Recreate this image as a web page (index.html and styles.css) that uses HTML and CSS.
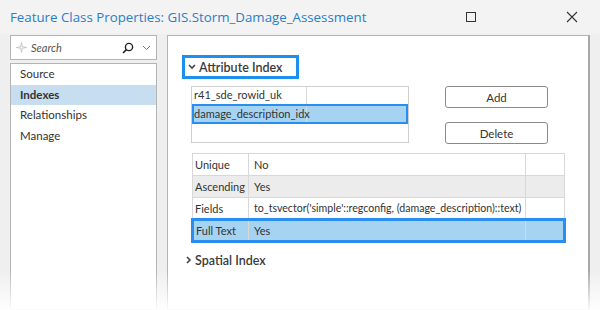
FILE: index.html
```html
<!DOCTYPE html>
<html lang="en">

<head>
  <meta charset="UTF-8">
  <title>Feature Class Properties</title>
  <link rel="stylesheet" href="styles.css">
</head>

<body>
  <div class="window">
    <div class="titlebar">
      <div class="title">Feature Class Properties: GIS.Storm_Damage_Assessment</div>
      <div class="win-buttons">
        <svg class="win-icon" width="12" height="12" viewBox="0 0 12 12">
          <rect x="1.5" y="1.5" width="9" height="9" fill="none" stroke="#333" stroke-width="1"/>
        </svg>
        <svg class="win-icon" width="12" height="12" viewBox="0 0 12 12">
          <path d="M1 1 L11 11 M11 1 L1 11" stroke="#333" stroke-width="1.1"/>
        </svg>
      </div>
    </div>

    <div class="body">
      <!-- left side: search + page list -->
      <div class="sidebar">
        <div class="search">
          <svg width="11" height="11" viewBox="0 0 11 11" class="sparkle">
            <path d="M5.5 0.5 L6.3 4.7 L10.5 5.5 L6.3 6.3 L5.5 10.5 L4.7 6.3 L0.5 5.5 L4.7 4.7 Z" fill="none" stroke="#bbb" stroke-width="0.8"/>
          </svg>
          <span class="search-text">Search</span>
          <svg width="12" height="12" viewBox="0 0 12 12" class="search-icon">
            <circle cx="7" cy="5" r="3.6" fill="none" stroke="#222" stroke-width="1.4"/>
            <path d="M4.4 7.6 L1 11" stroke="#222" stroke-width="1.6"/>
          </svg>
          <svg width="9" height="6" viewBox="0 0 9 6" class="search-drop">
            <path d="M1 1 L4.5 4.5 L8 1" fill="none" stroke="#777" stroke-width="1"/>
          </svg>
        </div>
        <div class="page-list">
          <div class="page-item">Source</div>
          <div class="page-item selected">Indexes</div>
          <div class="page-item">Relationships</div>
          <div class="page-item">Manage</div>
        </div>
      </div>

      <!-- right side: index settings -->
      <div class="panel">
        <div class="section-head boxed">
          <svg width="8" height="6" viewBox="0 0 8 6"><path d="M1 1 L4 4 L7 1" fill="none" stroke="#444" stroke-width="1.6"/></svg>
          <span>Attribute Index</span>
        </div>

        <div class="index-row">
          <div class="index-list">
            <div class="index-item"><span class="c1">r41_sde_rowid_uk</span><span class="c2"></span></div>
            <div class="index-item active"><span class="c1">damage_description_idx</span><span class="c2"></span></div>
          </div>
          <div class="index-buttons">
            <button class="btn">Add</button>
            <button class="btn">Delete</button>
          </div>
        </div>

        <table class="props">
          <colgroup>
            <col class="col-key">
            <col>
            <col class="col-end">
          </colgroup>
          <tr><td class="k">Unique</td><td>No</td><td></td></tr>
          <tr class="grey"><td class="k">Ascending</td><td>Yes</td><td></td></tr>
          <tr><td class="k">Fields</td><td class="long">to_tsvector('simple'::regconfig, (damage_description)::text)</td><td></td></tr>
          <tr class="active"><td class="k">Full Text</td><td>Yes</td><td></td></tr>
        </table>

        <div class="section-head">
          <svg width="6" height="8" viewBox="0 0 6 8"><path d="M1 1 L4 4 L1 7" fill="none" stroke="#444" stroke-width="1.6"/></svg>
          <span>Spatial Index</span>
        </div>
      </div>
    </div>
    <div class="fade"></div>
  </div>
</body>

</html>
```

FILE: styles.css
```css
/* Reset */
* {
  margin: 0;
  padding: 0;
  box-sizing: border-box;
}

html,
body {
  height: 100%;
  font-family: Lato, "Open Sans", sans-serif;
  font-size: 11px;
  color: #333;
  background: #efefef;
}

.window {
  position: relative;
  height: 310px;
  overflow: hidden;
  display: flex;
  flex-direction: column;
}

/* Title bar */
.titlebar {
  height: 34px;
  display: flex;
  align-items: center;
  padding-left: 10px;
  background: #f3f3f3;
}

.title {
  flex: 1;
  font-family: "Open Sans", sans-serif;
  font-size: 13.3px;
  color: #2a7dc8;
}

.win-buttons {
  display: flex;
  gap: 89px;
  padding-right: 22px;
}

/* Main area */
.body {
  flex: 1;
  display: flex;
  gap: 10px;
  padding: 1px 10px 0 10px;
}

.sidebar {
  width: 147px;
  display: flex;
  flex-direction: column;
  gap: 3px;
}

.search {
  height: 25px;
  background: #fff;
  border: 1px solid #b4b4b4;
  display: flex;
  align-items: center;
  padding: 0 5px;
}

.sparkle {
  margin-right: 4px;
}

.search-text {
  flex: 1;
  font-style: italic;
  color: #555;
}

.search-icon {
  margin-right: 8px;
}

.page-list {
  flex: 1;
  background: #fff;
  border: 1px solid #b4b4b4;
}

.page-item {
  height: 20.5px;
  line-height: 20px;
  padding-left: 9px;
  font-size: 11.5px;
}

.page-item.selected {
  background: #c7ddf0;
  font-weight: bold;
}

.panel {
  flex: 1;
  background: #fff;
  border: 1px solid #b4b4b4;
  border-right: 2px solid #a8a8a8;
  padding: 19px 0 0 14px;
}

.section-head {
  display: inline-flex;
  align-items: center;
  gap: 3px;
  height: 24px;
  padding: 0 4px;
  font-size: 12.5px;
  font-weight: 600;
  white-space: nowrap;
  color: #3a3a3a;
}

.section-head.boxed {
  border: 3px solid #1d8fec;
  width: 117px;
  padding-left: 3px;
}

.index-row {
  display: flex;
  gap: 36px;
  margin: 7px 0 0 9px;
}

.index-list {
  width: 218px;
  height: 57px;
  border: 1px solid #cfcfcf;
}

.index-item {
  display: flex;
  height: 17px;
  line-height: 16px;
}

.index-item .c1 {
  width: 115px;
  border-right: 1px solid #dadada;
  padding-left: 2px;
  white-space: nowrap;
}

.index-item.active {
  height: 20px;
  background: #a6d3f2;
  border: 2px solid #2a8ef0;
}

.index-item.active .c1 {
  width: 113px;
  padding-left: 0;
}

.index-buttons {
  display: flex;
  flex-direction: column;
  gap: 14px;
}

.btn {
  width: 103px;
  height: 22px;
  background: #fff;
  border: 1px solid #8a8a8a;
  border-radius: 3px;
  font-family: inherit;
  font-size: 11.5px;
  color: #333;
}

.props {
  margin: 9px 0 5px 9px;
  width: 375px;
  table-layout: fixed;
  border-collapse: collapse;
}

.col-key {
  width: 56px;
}

.col-end {
  width: 39px;
}

.props td {
  height: 22px;
  border: 1px solid #d8d8d8;
  padding: 0 2px 0 5px;
  white-space: nowrap;
}

.props td.k {
  padding-left: 2px;
}

.props td.long {
  font-size: 10.6px;
}

.props tr.grey td {
  background: #ececec;
}

.props tr.active td {
  background: #a6d3f2;
  border-top: 3px solid #2a8ef0;
  border-bottom: 3px solid #2a8ef0;
}

.props tr.active td:first-child {
  border-left: 3px solid #2a8ef0;
}

.props tr.active td:last-child {
  border-right: 3px solid #2a8ef0;
}

/* soft fade at the bottom of the screenshot */
.fade {
  position: absolute;
  left: 0;
  right: 0;
  bottom: 0;
  height: 40px;
  background: linear-gradient(rgba(255, 255, 255, 0), rgba(255, 255, 255, 0.95));
  pointer-events: none;
}
```
